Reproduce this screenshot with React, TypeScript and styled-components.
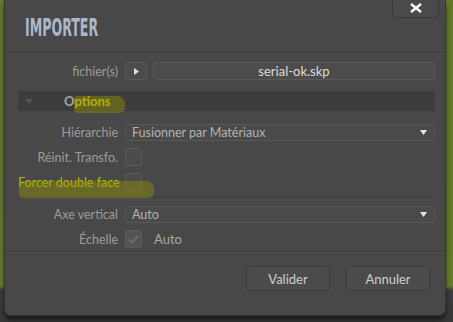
import styled, { createGlobalStyle } from "styled-components";

const GlobalStyle = createGlobalStyle`
	html, body {
		margin: 0;
		padding: 0;
		width: 453px;
		height: 322px;
		overflow: hidden;
		background: linear-gradient(#627a2a 0, #667c2c 286px, #3d3d3d 290px, #383838 100%);
		font-family: Lato, "Open Sans", sans-serif;
	}
`;

const Page = styled.div`
	width: 453px;
	height: 322px;
	padding-left: 4px;
	box-sizing: border-box;
`;

const Dialog = styled.div`
	position: relative;
	width: 442px;
	height: 316px;
	box-sizing: border-box;
	background: #484848;
	border: 1px solid #363636;
	border-top: none;
	border-radius: 0 0 7px 7px;
	box-shadow: 0 4px 5px rgba(0, 0, 0, 0.55);
	display: flex;
	flex-direction: column;
`;

const Header = styled.div`
	height: 53px;
	box-sizing: border-box;
	padding: 15px 0 0 20px;
	border-bottom: 1px solid #383838;
	box-shadow: 0 1px 0 #515151;
`;

const Title = styled.h1`
	margin: 0;
	display: inline-block;
	font-family: "DejaVu Sans Condensed", "DejaVu Sans", sans-serif;
	font-weight: 700;
	font-size: 25px;
	line-height: 25px;
	color: #adb7ca;
	transform: scaleX(0.56);
	transform-origin: left center;
`;

const CloseButton = styled.button`
	position: absolute;
	top: -1px;
	right: 6px;
	width: 47px;
	height: 19px;
	padding: 0;
	background: #4a4a4a;
	border: 1px solid #383838;
	border-top: none;
	border-radius: 0 0 5px 5px;
	display: flex;
	align-items: center;
	justify-content: center;
`;

const Body = styled.div`
	padding: 9px 10px 0 13px;
	display: flex;
	flex-direction: column;
	font-size: 12.5px;
`;

const Row = styled.div<{ $top: number }>`
	display: grid;
	grid-template-columns: 100px 1fr;
	column-gap: 7px;
	align-items: center;
	margin-top: ${(p) => p.$top}px;
	height: 18px;
`;

const Label = styled.span<{ $mark?: boolean }>`
	text-align: right;
	color: ${(p) => (p.$mark ? "#b9b80a" : "#9c9c9c")};
	white-space: nowrap;
`;

const Controls = styled.div`
	display: flex;
	align-items: center;
	gap: 6px;
	min-width: 0;
`;

const PlayButton = styled.div`
	width: 22px;
	height: 18px;
	box-sizing: border-box;
	background: #4c4c4c;
	border: 1px solid #5a5a5a;
	border-radius: 3px;
	display: flex;
	align-items: center;
	justify-content: center;
`;

const FileField = styled.div`
	flex: 1;
	height: 18px;
	box-sizing: border-box;
	background: #4c4c4c;
	border: 1px solid #5a5a5a;
	border-radius: 3px;
	text-align: center;
	font-size: 13px;
	line-height: 16px;
	color: #dcdcdc;
`;

const OptionsBar = styled.div`
	margin-top: 11px;
	height: 20px;
	background: #3d3d3d;
	display: flex;
	align-items: center;
	padding-left: 7px;
`;

const OptionsTitle = styled.span`
	margin-left: 31px;
	font-weight: 700;
	font-size: 13px;
	color: #a4a4a4;

	> em {
		font-style: normal;
		color: #c9c40c;
	}
`;

const Select = styled.div`
	flex: 1;
	height: 17px;
	box-sizing: border-box;
	background: #4a4a4a;
	border: 1px solid #575757;
	border-radius: 3px;
	display: flex;
	align-items: center;
	justify-content: space-between;
	padding: 0 7px 0 6px;
	color: #b2b2b2;
`;

const Check = styled.div<{ $on?: boolean }>`
	width: 17px;
	height: 18px;
	box-sizing: border-box;
	background: ${(p) => (p.$on ? "#545454" : "#4b4b4b")};
	border: 1px solid #5c5c5c;
	border-radius: 3px;
	display: flex;
	align-items: center;
	justify-content: center;
`;

const CheckText = styled.span`
	margin-left: 6px;
	font-size: 13px;
	color: #a8a8a8;
`;

const Divider = styled.div<{ $top: number; $bottom: number }>`
	margin: ${(p) => `${p.$top}px 0 ${p.$bottom}px`};
	height: 1px;
	background: #3a3a3a;
	box-shadow: 0 1px 0 #4f4f4f;
`;

const Footer = styled.div`
	margin-top: auto;
	height: 49px;
	border-top: 1px solid #3a3a3a;
	box-shadow: inset 0 1px 0 #4f4f4f;
	display: flex;
	justify-content: flex-end;
	align-items: flex-start;
	gap: 16px;
	padding: 14px 15px 0 0;
`;

const FootButton = styled.button`
	width: 84px;
	height: 25px;
	background: #4b4b4b;
	border: 1px solid #3b3b3b;
	border-radius: 4px;
	box-shadow: inset 0 1px 0 #525252;
	font-family: Lato, "Open Sans", sans-serif;
	font-size: 13px;
	color: #cfcfcf;
`;

// marker strokes drawn over the screenshot
const Marker = styled.div<{ $x: number; $y: number; $w: number; $h: number }>`
	position: absolute;
	left: ${(p) => p.$x}px;
	top: ${(p) => p.$y}px;
	width: ${(p) => p.$w}px;
	height: ${(p) => p.$h}px;
	background: rgba(150, 150, 0, 0.42);
	border-radius: 3px 8px 6px 4px;
	pointer-events: none;
`;

const Arrow = () => (
	<svg width="7" height="5" viewBox="0 0 7 5">
		<path d="M0 0h7L3.5 5z" fill="#e6e6e6" />
	</svg>
);

export default function App() {
	return (
		<>
			<GlobalStyle />
			<Page>
				<Dialog>
					<Header>
						<Title>IMPORTER</Title>
					</Header>
					<CloseButton aria-label="Fermer">
						<svg width="16" height="10" viewBox="0 0 16 10">
							<path d="M3 1l10 8M13 1L3 9" stroke="#f4f4f4" strokeWidth="2.6" />
						</svg>
					</CloseButton>
					<Body>
						<Row $top={0}>
							<Label>fichier(s)</Label>
							<Controls>
								<PlayButton>
									<svg width="5" height="7" viewBox="0 0 5 7">
										<path d="M0 0l5 3.5L0 7z" fill="#e0e0e0" />
									</svg>
								</PlayButton>
								<FileField>serial-ok.skp</FileField>
							</Controls>
						</Row>
						<OptionsBar>
							<svg width="8" height="5" viewBox="0 0 8 5">
								<path d="M0 0h8L4 5z" fill="#555" />
							</svg>
							<OptionsTitle>
								O<em>ptions</em>
							</OptionsTitle>
						</OptionsBar>
						<Row $top={12}>
							<Label>Hiérarchie</Label>
							<Controls>
								<Select>
									Fusionner par Matériaux
									<Arrow />
								</Select>
							</Controls>
						</Row>
						<Row $top={7}>
							<Label>Réinit. Transfo.</Label>
							<Controls>
								<Check />
							</Controls>
						</Row>
						<Row $top={7}>
							<Label $mark>Forcer double face</Label>
							<Controls>
								<Check />
							</Controls>
						</Row>
						<Divider $top={6} $bottom={7} />
						<Row $top={0}>
							<Label>Axe vertical</Label>
							<Controls>
								<Select>
									Auto
									<Arrow />
								</Select>
							</Controls>
						</Row>
						<Row $top={7}>
							<Label>Échelle</Label>
							<Controls>
								<Check $on>
									<svg width="11" height="9" viewBox="0 0 11 9">
										<path d="M1 4.5l3 3L10 1" stroke="#6c6c6c" strokeWidth="2" fill="none" />
									</svg>
								</Check>
								<CheckText>Auto</CheckText>
							</Controls>
						</Row>
					</Body>
					<Footer>
						<FootButton>Valider</FootButton>
						<FootButton>Annuler</FootButton>
					</Footer>
					<Marker $x={69} $y={96} $w={51} $h={17} />
					<Marker $x={14} $y={181} $w={135} $h={17} />
				</Dialog>
			</Page>
		</>
	);
}
